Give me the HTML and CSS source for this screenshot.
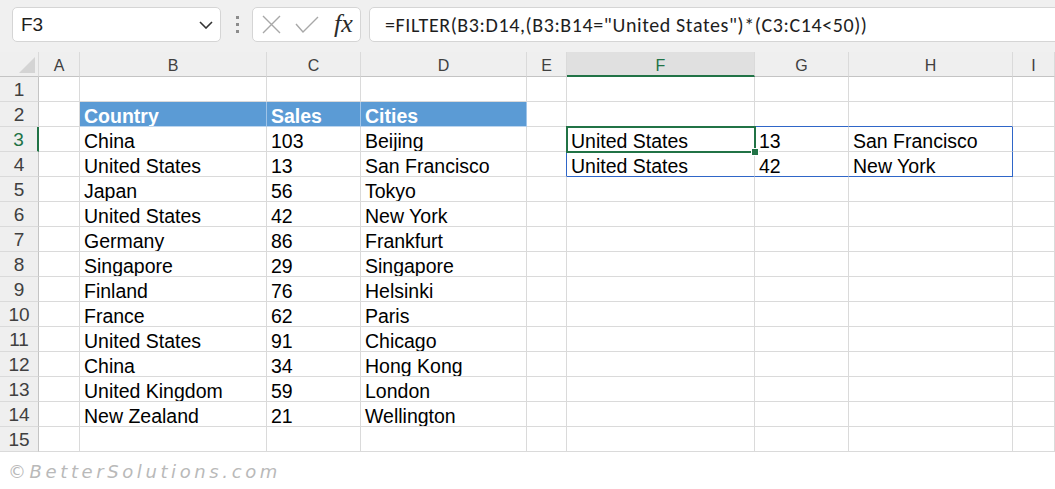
FILE: index.html
```html
<!DOCTYPE html>
<html lang="en">
<head>
    <meta charset="UTF-8">
    <title>FILTER - Excel</title>
    <link rel="stylesheet" href="styles.css">
</head>
<body>
    <div class="toolbar">
        <div class="namebox">
            <span>F3</span>
            <svg class="chev" width="14" height="8" viewBox="0 0 14 8"><path d="M1 1l6 6 6-6" fill="none" stroke="#333" stroke-width="1.6"/></svg>
        </div>
        <div class="grip"><i></i><i></i><i></i></div>
        <div class="fxbox">
            <svg class="ico-x" width="19" height="19" viewBox="0 0 19 19"><path d="M1 1l17 17M18 1L1 18" stroke="#a8a8a8" stroke-width="1.4" fill="none"/></svg>
            <svg class="ico-ok" width="24" height="17" viewBox="0 0 24 17"><path d="M1 8l7 8L23 1" stroke="#a8a8a8" stroke-width="1.4" fill="none"/></svg>
            <span class="fx">fx</span>
        </div>
        <div class="formula">=FILTER(B3:D14,(B3:B14="United States")*(C3:C14&lt;50))</div>
    </div>

    <div class="sheet">
        <div class="corner"></div>
        <div class="ch">A</div><div class="ch">B</div><div class="ch">C</div><div class="ch">D</div><div class="ch">E</div>
        <div class="ch sel">F</div><div class="ch">G</div><div class="ch">H</div><div class="ch">I</div>

        <div class="rh">1</div>
        <div class="c"></div><div class="c"></div><div class="c"></div><div class="c"></div><div class="c"></div><div class="c"></div><div class="c"></div><div class="c"></div><div class="c"></div>

        <div class="rh">2</div>
        <div class="c"></div><div class="c hd">Country</div><div class="c hd">Sales</div><div class="c hd">Cities</div><div class="c"></div>
        <div class="c sp-b"></div><div class="c sp-b"></div><div class="c sp-b"></div><div class="c"></div>

        <div class="rh sel">3</div>
        <div class="c"></div><div class="c">China</div><div class="c">103</div><div class="c">Beijing</div><div class="c sp-r"></div>
        <div class="c active">United States<div class="cursor"><span class="handle"></span></div></div><div class="c">13</div><div class="c sp-r">San Francisco</div><div class="c"></div>

        <div class="rh">4</div>
        <div class="c"></div><div class="c">United States</div><div class="c">13</div><div class="c">San Francisco</div><div class="c sp-r"></div>
        <div class="c sp-b">United States</div><div class="c sp-b">42</div><div class="c sp-b sp-r">New York</div><div class="c"></div>

        <div class="rh">5</div>
        <div class="c"></div><div class="c">Japan</div><div class="c">56</div><div class="c">Tokyo</div><div class="c"></div><div class="c"></div><div class="c"></div><div class="c"></div><div class="c"></div>

        <div class="rh">6</div>
        <div class="c"></div><div class="c">United States</div><div class="c">42</div><div class="c">New York</div><div class="c"></div><div class="c"></div><div class="c"></div><div class="c"></div><div class="c"></div>

        <div class="rh">7</div>
        <div class="c"></div><div class="c">Germany</div><div class="c">86</div><div class="c">Frankfurt</div><div class="c"></div><div class="c"></div><div class="c"></div><div class="c"></div><div class="c"></div>

        <div class="rh">8</div>
        <div class="c"></div><div class="c">Singapore</div><div class="c">29</div><div class="c">Singapore</div><div class="c"></div><div class="c"></div><div class="c"></div><div class="c"></div><div class="c"></div>

        <div class="rh">9</div>
        <div class="c"></div><div class="c">Finland</div><div class="c">76</div><div class="c">Helsinki</div><div class="c"></div><div class="c"></div><div class="c"></div><div class="c"></div><div class="c"></div>

        <div class="rh">10</div>
        <div class="c"></div><div class="c">France</div><div class="c">62</div><div class="c">Paris</div><div class="c"></div><div class="c"></div><div class="c"></div><div class="c"></div><div class="c"></div>

        <div class="rh">11</div>
        <div class="c"></div><div class="c">United States</div><div class="c">91</div><div class="c">Chicago</div><div class="c"></div><div class="c"></div><div class="c"></div><div class="c"></div><div class="c"></div>

        <div class="rh">12</div>
        <div class="c"></div><div class="c">China</div><div class="c">34</div><div class="c">Hong Kong</div><div class="c"></div><div class="c"></div><div class="c"></div><div class="c"></div><div class="c"></div>

        <div class="rh">13</div>
        <div class="c"></div><div class="c">United Kingdom</div><div class="c">59</div><div class="c">London</div><div class="c"></div><div class="c"></div><div class="c"></div><div class="c"></div><div class="c"></div>

        <div class="rh">14</div>
        <div class="c"></div><div class="c">New Zealand</div><div class="c">21</div><div class="c">Wellington</div><div class="c"></div><div class="c"></div><div class="c"></div><div class="c"></div><div class="c"></div>

        <div class="rh">15</div>
        <div class="c"></div><div class="c"></div><div class="c"></div><div class="c"></div><div class="c"></div><div class="c"></div><div class="c"></div><div class="c"></div><div class="c"></div>
    </div>

    <div class="watermark">&copy;BetterSolutions.com</div>
</body>
</html>
```

FILE: styles.css
```css
body {
    margin: 0;
    background: #fff;
    font-family: "Liberation Sans", Arial, sans-serif;
    overflow: hidden;
}

/* formula bar */
.toolbar {
    height: 52px;
    box-sizing: border-box;
    padding: 7px 0 0 12px;
    background: #f0f0f0;
    display: flex;
    align-items: flex-start;
}
.namebox {
    width: 209px;
    height: 35px;
    box-sizing: border-box;
    padding: 0 7px 0 8px;
    background: #fff;
    border: 1px solid #d5d5d5;
    border-radius: 5px;
    display: flex;
    align-items: center;
    justify-content: space-between;
    font-size: 19px;
    color: #1e1e1e;
}
.grip {
    width: 3px;
    margin: 9px 13px 0 15px;
    display: flex;
    flex-direction: column;
    gap: 4px;
}
.grip i {
    width: 3px;
    height: 3px;
    background: #8c8c8c;
}
.fxbox {
    width: 109px;
    height: 35px;
    box-sizing: border-box;
    margin-right: 8px;
    padding-left: 9px;
    background: #fff;
    border: 1px solid #d5d5d5;
    border-radius: 5px;
    display: flex;
    align-items: center;
}
.ico-ok {
    margin-left: 14px;
}
.fx {
    margin-left: 15px;
    margin-top: -2px;
    font-family: "Liberation Serif", "DejaVu Serif", serif;
    font-style: italic;
    font-size: 26px;
    color: #2b2b2b;
    line-height: 1;
}
.formula {
    flex: 1;
    height: 35px;
    box-sizing: border-box;
    margin-right: -20px;
    padding-left: 15px;
    background: #fff;
    border: 1px solid #d5d5d5;
    border-radius: 5px;
    display: flex;
    align-items: center;
    font-family: Calibri, Carlito, Lato, sans-serif;
    font-size: 20px;
    letter-spacing: 0.6px;
    color: #1e1e1e;
}

/* grid */
.sheet {
    display: grid;
    grid-template-columns: 39px 41px 187px 94px 166px 40px 188px 94px 164px 1fr;
    grid-auto-rows: 25px;
}
.sheet > div {
    box-sizing: border-box;
    border-right: 1px solid #dadada;
    border-bottom: 1px solid #dadada;
    white-space: nowrap;
    overflow: hidden;
}
.corner {
    background: #efefef;
    position: relative;
}
.corner::after {
    content: "";
    position: absolute;
    right: 3px;
    bottom: 3px;
    border-left: 16px solid transparent;
    border-bottom: 16px solid #d4d4d4;
}
.sheet > .corner,
.sheet > .ch {
    border-bottom-color: #c4c4c4;
}
.ch {
    background: #efefef;
    color: #404040;
    text-align: center;
    font-size: 16px;
    padding-top: 4px;
    line-height: 20px;
}
.sheet > .ch.sel {
    background: #e0e0e0;
    color: #217346;
    border-bottom: 2px solid #217346;
}
.rh {
    background: #efefef;
    color: #404040;
    text-align: center;
    font-size: 19px;
    padding-top: 2px;
    line-height: 22px;
}
.sheet > .rh {
    border-right-color: #c4c4c4;
}
.sheet > .rh.sel {
    color: #217346;
    border-right: 2px solid #217346;
}
.c {
    font-size: 19.5px;
    padding: 4px 0 0 4px;
    line-height: 20px;
    color: #000;
}
.sheet > .hd {
    background: #5b9bd5;
    color: #fff;
    font-weight: bold;
    border-right-color: #9fc4e8;
    border-bottom-color: #bcd5ee;
}

/* spill range */
.sheet > .sp-b {
    border-bottom-color: #2f66c8;
}
.sheet > .sp-r {
    border-right-color: #2f66c8;
}

/* active cell */
.sheet > .active {
    position: relative;
    overflow: visible;
}
.cursor {
    position: absolute;
    top: -1px;
    left: -1px;
    right: -2px;
    bottom: -2px;
    border: 2px solid #217346;
}
.handle {
    position: absolute;
    right: -5px;
    bottom: -5px;
    width: 6px;
    height: 6px;
    background: #217346;
    border: 1px solid #fff;
}

.watermark {
    padding: 9px 0 0 8px;
    font-family: "DejaVu Sans", sans-serif;
    font-style: italic;
    font-size: 18px;
    letter-spacing: 3.6px;
    color: #b9b9b9;
}
```
